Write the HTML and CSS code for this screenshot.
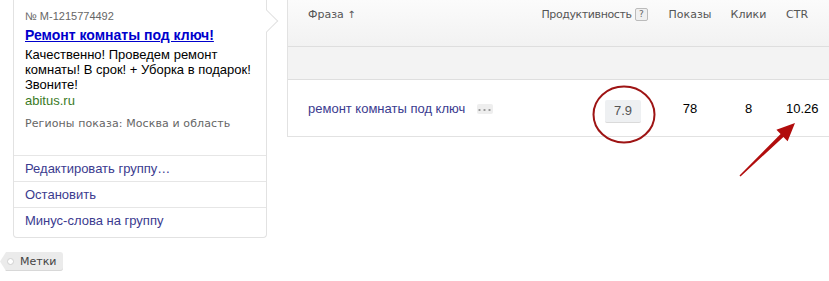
FILE: index.html
```html
<!DOCTYPE html>
<html lang="ru">
<head>
    <meta charset="UTF-8">
    <title>Фразы группы</title>
    <link rel="stylesheet" href="styles.css">
</head>
<body>

<div class="page">
    <div class="side">
        <div class="ad-card">
            <div class="ad-body">
                <div class="ad-num">№ M-1215774492</div>
                <a class="ad-title" href="#">Ремонт комнаты под ключ!</a>
                <div class="ad-text">Качественно! Проведем ремонт комнаты! В срок! + Уборка в подарок! Звоните!</div>
                <div class="ad-domain">abitus.ru</div>
                <div class="ad-regions">Регионы показа: Москва и область</div>
            </div>
            <ul class="ad-actions">
                <li><a href="#">Редактировать группу…</a></li>
                <li><a href="#">Остановить</a></li>
                <li><a href="#">Минус-слова на группу</a></li>
            </ul>
        </div>
        <span class="tag"><span class="tag-hole"></span>Метки</span>
    </div>

    <div class="phrases">
        <div class="ph-row ph-head">
            <div class="col col-phrase">Фраза <span class="sort">↑</span></div>
            <div class="col col-prod"><span class="prod-title">Продуктивность</span> <span class="help">?</span></div>
            <div class="col col-shows">Показы</div>
            <div class="col col-clicks">Клики</div>
            <div class="col col-ctr">CTR</div>
        </div>
        <div class="ph-band"></div>
        <div class="ph-row ph-item">
            <div class="col col-phrase"><a href="#">ремонт комнаты под ключ</a><span class="more"></span></div>
            <div class="col col-prod"><span class="score">7.9</span></div>
            <div class="col col-shows">78</div>
            <div class="col col-clicks">8</div>
            <div class="col col-ctr">10.26</div>
        </div>
    </div>

    <!-- annotation marks drawn over the table -->
    <svg class="marks" width="829" height="281" viewBox="0 0 829 281">
        <ellipse cx="624" cy="114.5" rx="30.5" ry="28" fill="none" stroke="#9e1414" stroke-width="2"/>
        <polygon points="739.5,175.5 780.6,134.1 776.4,129.7 795,123 787.6,141.3 783.4,136.9 740.5,176.5" fill="#b10d0d"/>
    </svg>
</div>

</body>
</html>
```

FILE: styles.css
```css
body {
    margin: 0;
    font-family: "Liberation Sans", Arial, sans-serif;
    font-size: 13px;
    color: #000;
    background: #fff;
}
a {
    color: #3b3b8f;
    text-decoration: none;
}
.page {
    position: relative;
    display: flex;
    align-items: flex-start;
    width: 829px;
    height: 281px;
    overflow: hidden;
}
.side {
    width: 254px;
    margin-left: 13px;
    flex-shrink: 0;
}
.ad-card {
    position: relative;
    border: 1px solid #e2e2e2;
    border-top: none;
    border-radius: 0 0 4px 4px;
    background: #fff;
    padding-bottom: 4px;
}
.ad-card::after {
    content: "";
    position: absolute;
    top: 13px;
    right: -9px;
    width: 16px;
    height: 16px;
    box-sizing: border-box;
    background: #fff;
    border-top: 1px solid #e2e2e2;
    border-right: 1px solid #e2e2e2;
    transform: rotate(45deg);
}
.ad-body {
    padding: 9px 11px 24px 11px;
}
.ad-num {
    font-size: 11px;
    line-height: 14px;
    color: #666;
}
.ad-title {
    display: inline-block;
    margin-top: 3px;
    font-size: 14px;
    line-height: 18px;
    font-weight: bold;
    color: #0000cc;
    text-decoration: underline;
}
.ad-text {
    margin-top: 3px;
    line-height: 15px;
}
.ad-domain {
    margin-top: 1px;
    line-height: 15px;
    color: #3b7a26;
}
.ad-regions {
    margin-top: 9px;
    font-family: "DejaVu Sans", Verdana, sans-serif;
    font-size: 11px;
    line-height: 14px;
    color: #666;
    letter-spacing: 0.1px;
}
.ad-actions {
    list-style: none;
    margin: 0;
    padding: 0;
}
.ad-actions li {
    border-top: 1px solid #e6e6e6;
    height: 25px;
    line-height: 25px;
    padding-left: 11px;
}
.tag {
    display: inline-flex;
    align-items: center;
    gap: 6px;
    margin: 14px 0 0 -13px;
    height: 19px;
    padding: 0 7px 0 7px;
    background: #ebebeb;
    border-radius: 0 3px 3px 0;
    box-shadow: inset 0 -1px 0 #d8d8d8;
    clip-path: polygon(6px 0, 100% 0, 100% 100%, 6px 100%, 0 50%);
    font-family: "DejaVu Sans", Verdana, sans-serif;
    font-size: 11px;
    color: #444;
}
.tag-hole {
    width: 5px;
    height: 5px;
    border-radius: 50%;
    background: #fff;
    border: 1px solid #cfcfcf;
}
.phrases {
    flex: 1;
    margin-left: 20px;
    border-left: 1px solid #e2e2e2;
}
.ph-row {
    display: flex;
}
.ph-head {
    height: 47px;
    background: linear-gradient(#fbfbfb, #f2f2f2);
    border-bottom: 1px solid #dedede;
    font-family: "DejaVu Sans", Verdana, sans-serif;
    font-size: 11px;
    color: #555;
    padding-top: 8px;
    box-sizing: border-box;
}
.ph-band {
    height: 32px;
    background: #f3f3f3;
    border-bottom: 1px solid #dedede;
}
.ph-item {
    height: 56px;
    align-items: center;
    border-bottom: 1px solid #e2e2e2;
}
.col-phrase {
    width: 222px;
    padding-left: 20px;
}
.col-prod {
    width: 118px;
    padding-right: 7px;
    text-align: right;
}
.prod-title {
    letter-spacing: -0.4px;
}
.col-shows {
    width: 70px;
    text-align: center;
}
.col-clicks {
    width: 47px;
    text-align: center;
}
.col-ctr {
    padding-left: 14px;
}
.sort {
    font-size: 10px;
}
.help {
    display: inline-block;
    width: 11px;
    height: 11px;
    line-height: 11px;
    text-align: center;
    font-size: 9px;
    color: #666;
    background: #f0f0f0;
    border: 1px solid #bbb;
    border-radius: 2px;
    vertical-align: 1px;
}
.more {
    display: inline-block;
    margin-left: 12px;
    width: 16px;
    height: 10px;
    vertical-align: -1px;
    border-radius: 2px;
    background-color: #eee;
    background-image: radial-gradient(circle, #999 0.9px, transparent 1.3px);
    background-size: 5px 10px;
    background-position: 0 1px;
    background-repeat: repeat-x;
}
.score {
    display: inline-block;
    margin-top: 6px;
    margin-right: 7px;
    width: 36px;
    height: 22px;
    line-height: 22px;
    text-align: center;
    color: #555;
    background: #eef0f2;
    border-radius: 2px;
    border-bottom: 1px solid #dadada;
}
.marks {
    position: absolute;
    left: 0;
    top: 0;
    pointer-events: none;
}
```
